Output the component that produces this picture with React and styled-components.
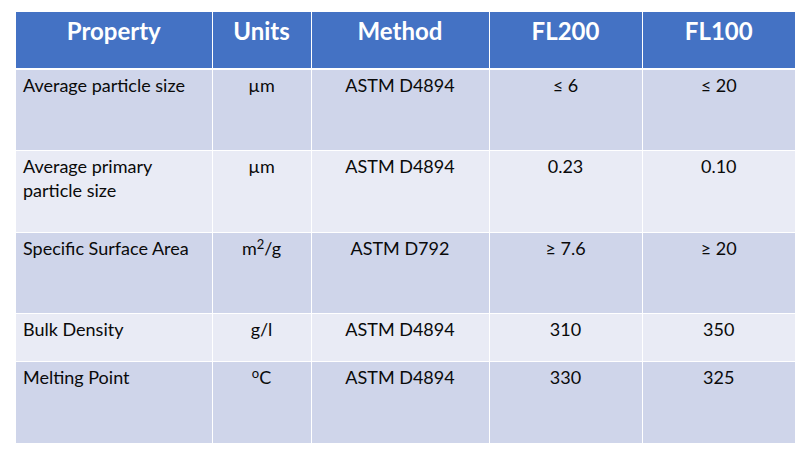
import React from 'react'
import styled, { createGlobalStyle } from 'styled-components'

const GlobalStyle = createGlobalStyle`
    html, body {
        margin: 0;
        padding: 0;
        background: #ffffff;
    }
    body {
        font-family: Lato, "Open Sans", sans-serif;
    }
`

const Page = styled.div`
    width: 800px;
    height: 450px;
    padding: 12px 0 0 16px;
    box-sizing: border-box;
    background: #ffffff;
`

const Table = styled.table`
    width: 779px;
    table-layout: fixed;
    border-collapse: collapse;
    border-spacing: 0;
`

const HeadRow = styled.tr`
    height: 57px;
    background: #4472c4;
`

const HeadCell = styled.th`
    padding: 5px 4px 0;
    vertical-align: top;
    text-align: center;
    font-size: 24px;
    line-height: 1.2;
    font-weight: 700;
    color: #ffffff;
    border-left: 1px solid #ffffff;
    border-bottom: 2px solid #ffffff;

    &:first-child {
        border-left: none;
    }
`

const Row = styled.tr`
    background: ${(p) => (p.$odd ? '#cfd5ea' : '#e9ebf5')};
`

const Cell = styled.td`
    padding: 3px 7px 0;
    vertical-align: top;
    text-align: ${(p) => p.$align};
    font-size: 18px;
    line-height: 24px;
    color: #0a0a0a;
    border-left: 1px solid #ffffff;
    border-top: 1px solid #ffffff;

    &:first-child {
        border-left: none;
    }
`

const Sup = styled.sup`
    font-size: 13px;
    line-height: 0;
    vertical-align: 6px;
`

const columns = [
    { label: 'Property', width: 196, align: 'left' },
    { label: 'Units', width: 99, align: 'center' },
    { label: 'Method', width: 178, align: 'center' },
    { label: 'FL200', width: 153, align: 'center' },
    { label: 'FL100', width: 153, align: 'center' },
]

const rows = [
    { height: 81, cells: ['Average particle size', 'µm', 'ASTM D4894', '≤ 6', '≤ 20'] },
    { height: 82, cells: [<>Average primary<br />particle size</>, 'µm', 'ASTM D4894', '0.23', '0.10'] },
    { height: 81, cells: ['Specific Surface Area', <>m<Sup>2</Sup>/g</>, 'ASTM D792', '≥ 7.6', '≥ 20'] },
    { height: 48, cells: ['Bulk Density', 'g/l', 'ASTM D4894', '310', '350'] },
    { height: 82, cells: ['Melting Point', <><Sup>o</Sup>C</>, 'ASTM D4894', '330', '325'] },
]

function App() {
    return (
        <Page>
            <GlobalStyle />
            <Table>
                <colgroup>
                    {columns.map((c) => (
                        <col key={c.label} style={{ width: c.width }} />
                    ))}
                </colgroup>
                <thead>
                    <HeadRow>
                        {columns.map((c) => (
                            <HeadCell key={c.label}>{c.label}</HeadCell>
                        ))}
                    </HeadRow>
                </thead>
                <tbody>
                    {rows.map((r, i) => (
                        <Row key={i} $odd={i % 2 === 0} style={{ height: r.height }}>
                            {r.cells.map((cell, j) => (
                                <Cell key={j} $align={columns[j].align}>{cell}</Cell>
                            ))}
                        </Row>
                    ))}
                </tbody>
            </Table>
        </Page>
    )
}

export default App
